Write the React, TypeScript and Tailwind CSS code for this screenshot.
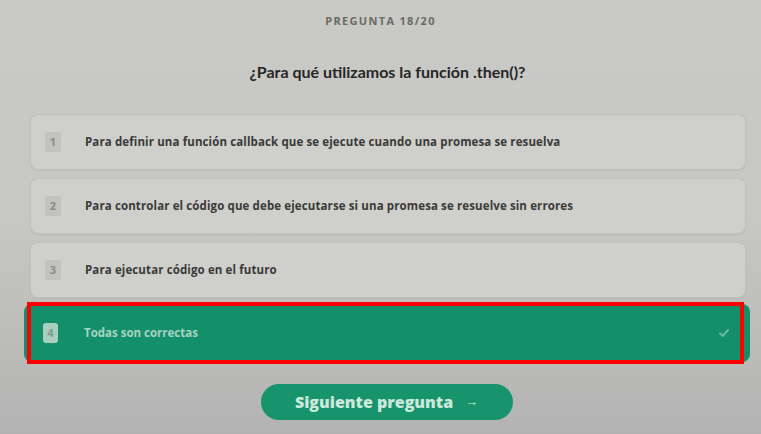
import React from "react";

const options = [
  "Para definir una función callback que se ejecute cuando una promesa se resuelva",
  "Para controlar el código que debe ejecutarse si una promesa se resuelve sin errores",
  "Para ejecutar código en el futuro",
];

export default function App() {
  return (
    <div
      className="w-[761px] h-[434px] overflow-hidden flex flex-col items-center bg-[linear-gradient(180deg,#c9c9c5_0%,#c7c7c3_50%,#b3b3b3_100%)]"
      style={{ fontFamily: '"Open Sans", "Liberation Sans", sans-serif' }}
    >
      <div className="mt-[13px] text-[11px] font-bold tracking-[0.12em] text-[#6a6a68] leading-[16px]">
        PREGUNTA 18/20
      </div>
      <div
        className="mt-[33px] text-[16px] font-bold text-[#262626] leading-[20px] ml-[14px]"
        style={{ fontFamily: 'Lato, "Open Sans", sans-serif' }}
      >
        ¿Para qué utilizamos la función .then()?
      </div>
      <div className="mt-[32px] w-full flex flex-col pl-[30px] pr-[15px] gap-[8px]">
        {options.map((o, i) => (
          <div
            key={i}
            className="h-[56px] flex items-center rounded-[8px] border border-[#c0c0bc] bg-[#cfcfcb] shadow-[0_1px_2px_rgba(0,0,0,0.06)]"
          >
            <div className="ml-[14px] w-[16px] h-[20px] rounded-[3px] bg-[#c2c2be] flex items-center justify-center text-[11px] font-bold text-[#8a8a86]">
              {i + 1}
            </div>
            <div className="ml-[24px] text-[11.5px] font-bold text-[#3a3a38] tracking-[0.01em]">{o}</div>
          </div>
        ))}
      </div>
      <div className="relative self-start mt-[6px] w-[726px] ml-[24px] h-[58px] rounded-[8px] bg-[#13906a] flex items-center">
        <div className="ml-[19px] w-[15px] h-[20px] rounded-[3px] bg-[#a9cfbf] flex items-center justify-center text-[11px] font-bold text-[#7a9a8c]">
          4
        </div>
        <div className="ml-[26px] text-[11.5px] font-bold text-[#a8d3c2]">Todas son correctas</div>
        <div className="ml-auto mr-[20px]">
          <svg width="12" height="12" viewBox="0 0 12 12" fill="none">
            <path d="M2 6.5 L4.8 9 L10 3" stroke="#6fb99c" strokeWidth="2" strokeLinecap="round" strokeLinejoin="round" />
          </svg>
        </div>
        <div className="absolute left-[3px] top-[-2px] w-[717px] h-[62px] border-[4px] border-[#f00] pointer-events-none" />
      </div>
      <button className="mt-[22px] w-[252px] h-[36px] rounded-full bg-[#17946c] flex items-center justify-center gap-[12px] text-[16px] font-extrabold text-[#cde8dc] ml-[12px]">
        <span>Siguiente pregunta</span>
        <span className="text-[13px]">→</span>
      </button>
    </div>
  );
}
